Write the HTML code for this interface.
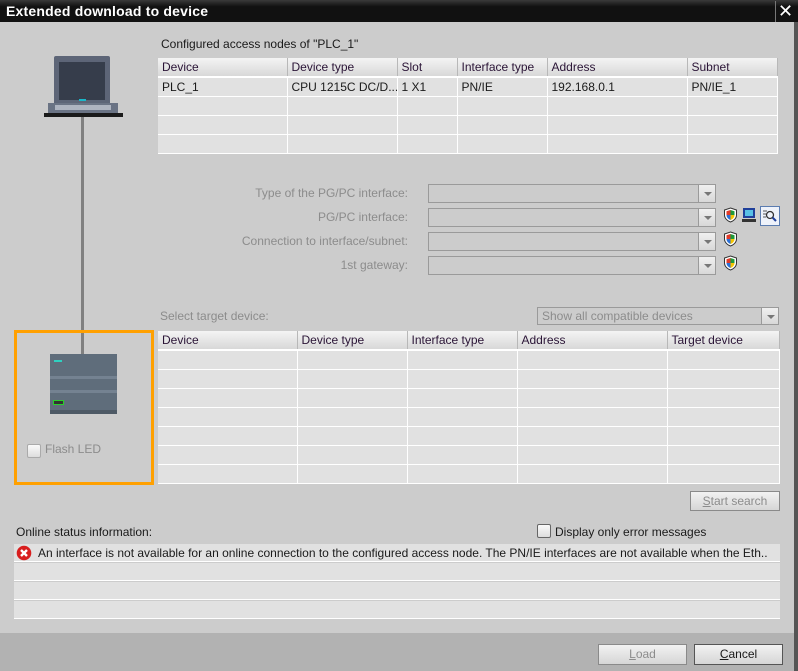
<!DOCTYPE html>
<html><head><meta charset="utf-8">
<style>
*{box-sizing:border-box;margin:0;padding:0}
body{width:798px;height:671px;background:#cccccc;font-family:"Liberation Sans",sans-serif;font-size:12px;color:#1a1a1a;position:relative;overflow:hidden}
.a{position:absolute}
.title{left:0;top:0;width:798px;height:22px;background:linear-gradient(#3a3a3a,#111 30%,#111);color:#fff;font-weight:bold;font-size:14px;line-height:22px;padding-left:6px;letter-spacing:0.2px}
.close{right:3px;top:1px;width:20px;height:21px;border-left:1px solid #777;color:#fff;font-size:18px;line-height:20px;text-align:center}
.rb{left:794px;top:22px;width:4px;height:649px;background:#555}
table{border-collapse:collapse;table-layout:fixed;position:absolute}
td,th{height:19px;border-right:1px solid #fff;border-bottom:1px solid #fff;background:#e1e1e1;font-weight:normal;text-align:left;padding-left:4px;white-space:nowrap;overflow:hidden;font-size:12px}
th{background:linear-gradient(#f4f4f4,#d8d8d8);border-right:1px solid #b8b8b8;border-bottom:2px solid #fff;color:#2a1436}
.lbl{color:#8c8c8c;text-align:right;width:258px;left:150px}
.combo{left:428px;width:288px;height:19px;border:1px solid #9a9a9a;background:#cccccc}
.combo .ar{position:absolute;right:0;top:0;width:17px;height:17px;border-left:1px solid #9a9a9a;background:linear-gradient(#f0f0f0,#d8d8d8)}
.combo .ar:after{content:"";position:absolute;left:5px;top:7px;border-left:4px solid transparent;border-right:4px solid transparent;border-top:4px solid #777}
.btn{height:20px;border:1px solid #8a8a8a;background:linear-gradient(#f2f2f2,#d6d6d6);text-align:center;line-height:18px}
</style></head><body>
<div class="a title">Extended download to device</div>
<div class="a close">✕</div>
<div class="a rb"></div>

<div class="a" style="left:54px;top:56px;width:56px;height:48px;background:#5d6577;border-radius:2px 2px 0 0"></div>
<div class="a" style="left:59px;top:62px;width:46px;height:38px;background:#363d4b"></div>
<div class="a" style="left:79px;top:99px;width:7px;height:2px;background:#19b7c9"></div>
<div class="a" style="left:48px;top:103px;width:70px;height:11px;background:#6a7384"></div>
<div class="a" style="left:55px;top:105px;width:56px;height:5px;background:#aeb4c0"></div>
<div class="a" style="left:44px;top:113px;width:79px;height:4px;background:#1a1a1a"></div>
<div class="a" style="left:81px;top:117px;width:3px;height:238px;background:#808080"></div>

<div class="a" style="left:14px;top:330px;width:140px;height:155px;border:3px solid #ffa000"></div>
<div class="a" style="left:50px;top:354px;width:67px;height:60px;background:#5f6d7b"></div>
<div class="a" style="left:50px;top:376px;width:67px;height:3px;background:#748291"></div>
<div class="a" style="left:50px;top:390px;width:67px;height:3px;background:#748291"></div>
<div class="a" style="left:50px;top:410px;width:67px;height:4px;background:#4e5a66"></div>
<div class="a" style="left:54px;top:360px;width:8px;height:2px;background:#2fd0c0"></div>
<div class="a" style="left:53px;top:400px;width:11px;height:5px;border:1px solid #2ad02a;background:#333"></div>
<div class="a" style="left:27px;top:444px;width:14px;height:14px;border:1px solid #aaa;border-radius:2px;background:linear-gradient(#fafafa,#ddd)"></div>
<div class="a" style="left:45px;top:442px;color:#8c8c8c">Flash LED</div>

<div class="a" style="left:161px;top:37px">Configured access nodes of "PLC_1"</div>
<table style="left:158px;top:58px;width:619px">
<colgroup><col style="width:129px"><col style="width:110px"><col style="width:60px"><col style="width:90px"><col style="width:140px"><col style="width:90px"></colgroup>
<tr><th>Device</th><th>Device type</th><th>Slot</th><th>Interface type</th><th>Address</th><th>Subnet</th></tr>
<tr><td>PLC_1</td><td>CPU 1215C DC/D...</td><td>1 X1</td><td>PN/IE</td><td>192.168.0.1</td><td>PN/IE_1</td></tr>
<tr><td></td><td></td><td></td><td></td><td></td><td></td></tr>
<tr><td></td><td></td><td></td><td></td><td></td><td></td></tr>
<tr><td></td><td></td><td></td><td></td><td></td><td></td></tr>
</table>

<div class="a lbl" style="top:186px">Type of the PG/PC interface:</div>
<div class="a lbl" style="top:210px">PG/PC interface:</div>
<div class="a lbl" style="top:234px">Connection to interface/subnet:</div>
<div class="a lbl" style="top:258px">1st gateway:</div>
<div class="a combo" style="top:184px"><div class="ar"></div></div>
<div class="a combo" style="top:208px"><div class="ar"></div></div>
<div class="a combo" style="top:232px"><div class="ar"></div></div>
<div class="a combo" style="top:256px"><div class="ar"></div></div>

<svg class="a" style="left:723px;top:207px" width="15" height="16" viewBox="0 0 15 16"><path d="M7.5 1 L13.5 3 V8 C13.5 11.5 10.5 14 7.5 15 C4.5 14 1.5 11.5 1.5 8 V3 Z" fill="#fff" stroke="#333" stroke-width="1"/><path d="M7.5 3 L11.5 4.3 V8 H7.5Z" fill="#1f9a3a"/><path d="M7.5 3 L3.5 4.3 V8 H7.5Z" fill="#e03a2a"/><path d="M3.5 8 H7.5 V13 C5.5 12.3 3.5 10.5 3.5 8Z" fill="#2a6fd6"/><path d="M7.5 8 H11.5 C11.5 10.5 9.5 12.3 7.5 13Z" fill="#f5c400"/></svg>
<svg class="a" style="left:723px;top:231px" width="15" height="16" viewBox="0 0 15 16"><path d="M7.5 1 L13.5 3 V8 C13.5 11.5 10.5 14 7.5 15 C4.5 14 1.5 11.5 1.5 8 V3 Z" fill="#fff" stroke="#333" stroke-width="1"/><path d="M7.5 3 L11.5 4.3 V8 H7.5Z" fill="#1f9a3a"/><path d="M7.5 3 L3.5 4.3 V8 H7.5Z" fill="#e03a2a"/><path d="M3.5 8 H7.5 V13 C5.5 12.3 3.5 10.5 3.5 8Z" fill="#2a6fd6"/><path d="M7.5 8 H11.5 C11.5 10.5 9.5 12.3 7.5 13Z" fill="#f5c400"/></svg>
<svg class="a" style="left:723px;top:255px" width="15" height="16" viewBox="0 0 15 16"><path d="M7.5 1 L13.5 3 V8 C13.5 11.5 10.5 14 7.5 15 C4.5 14 1.5 11.5 1.5 8 V3 Z" fill="#fff" stroke="#333" stroke-width="1"/><path d="M7.5 3 L11.5 4.3 V8 H7.5Z" fill="#1f9a3a"/><path d="M7.5 3 L3.5 4.3 V8 H7.5Z" fill="#e03a2a"/><path d="M3.5 8 H7.5 V13 C5.5 12.3 3.5 10.5 3.5 8Z" fill="#2a6fd6"/><path d="M7.5 8 H11.5 C11.5 10.5 9.5 12.3 7.5 13Z" fill="#f5c400"/></svg>
<svg class="a" style="left:741px;top:207px" width="16" height="16" viewBox="0 0 16 16"><rect x="2" y="1" width="12" height="10" fill="#1f3f9a"/><rect x="4" y="3" width="8" height="6" fill="#58c0e6"/><rect x="1" y="12" width="14" height="3" fill="#333"/></svg>
<svg class="a" style="left:760px;top:206px" width="20" height="20" viewBox="0 0 20 20"><rect x="0.5" y="0.5" width="19" height="19" fill="#eef2fa" stroke="#5b7cb0"/><path d="M3 5h4M3 8h3M3 11h3" stroke="#555"/><circle cx="10" cy="9" r="3.5" fill="none" stroke="#333" stroke-width="1.3"/><path d="M12.5 11.5 L16 15" stroke="#1f3f9a" stroke-width="2"/></svg>

<div class="a" style="left:160px;top:309px;color:#8c8c8c">Select target device:</div>
<div class="a combo" style="left:537px;top:307px;width:242px;height:18px"><div class="ar" style="height:16px"></div><span style="position:absolute;left:4px;top:1px;color:#8c8c8c">Show all compatible devices</span></div>

<table style="left:158px;top:331px;width:621px">
<colgroup><col style="width:139px"><col style="width:110px"><col style="width:110px"><col style="width:150px"><col style="width:112px"></colgroup>
<tr><th>Device</th><th>Device type</th><th>Interface type</th><th>Address</th><th>Target device</th></tr>
<tr><td></td><td></td><td></td><td></td><td></td></tr>
<tr><td></td><td></td><td></td><td></td><td></td></tr>
<tr><td></td><td></td><td></td><td></td><td></td></tr>
<tr><td></td><td></td><td></td><td></td><td></td></tr>
<tr><td></td><td></td><td></td><td></td><td></td></tr>
<tr><td></td><td></td><td></td><td></td><td></td></tr>
<tr><td></td><td></td><td></td><td></td><td></td></tr>
</table>

<div class="a btn" style="left:690px;top:491px;width:90px;color:#8c8c8c"><u>S</u>tart search</div>

<div class="a" style="left:537px;top:524px;width:14px;height:14px;border:1px solid #666;border-radius:2px;background:linear-gradient(#fafafa,#ddd)"></div>
<div class="a" style="left:555px;top:525px">Display only error messages</div>
<div class="a" style="left:16px;top:525px">Online status information:</div>

<div class="a" style="left:14px;top:544px;width:766px;height:18px;background:#e1e1e1;border-bottom:1px solid #fff"></div>
<div class="a" style="left:14px;top:563px;width:766px;height:18px;background:#e1e1e1;border-bottom:1px solid #fff"></div>
<div class="a" style="left:14px;top:582px;width:766px;height:18px;background:#e1e1e1;border-bottom:1px solid #fff"></div>
<div class="a" style="left:14px;top:601px;width:766px;height:18px;background:#e1e1e1;border-bottom:1px solid #fff"></div>
<svg class="a" style="left:16px;top:545px" width="16" height="16" viewBox="0 0 16 16"><circle cx="8" cy="8" r="7.3" fill="#d81e1e"/><path d="M5 5 L11 11 M11 5 L5 11" stroke="#fff" stroke-width="2.4"/></svg>
<div class="a" style="left:38px;top:546px;white-space:nowrap;width:742px;overflow:hidden">An interface is not available for an online connection to the configured access node. The PN/IE interfaces are not available when the Eth..</div>

<div class="a" style="left:0;top:633px;width:794px;height:38px;background:#b2b2b2"></div>
<div class="a btn" style="left:598px;top:644px;width:89px;height:21px;color:#8c8c8c"><u>L</u>oad</div>
<div class="a btn" style="left:694px;top:644px;width:89px;height:21px;border-color:#555"><u>C</u>ancel</div>
</body></html>
